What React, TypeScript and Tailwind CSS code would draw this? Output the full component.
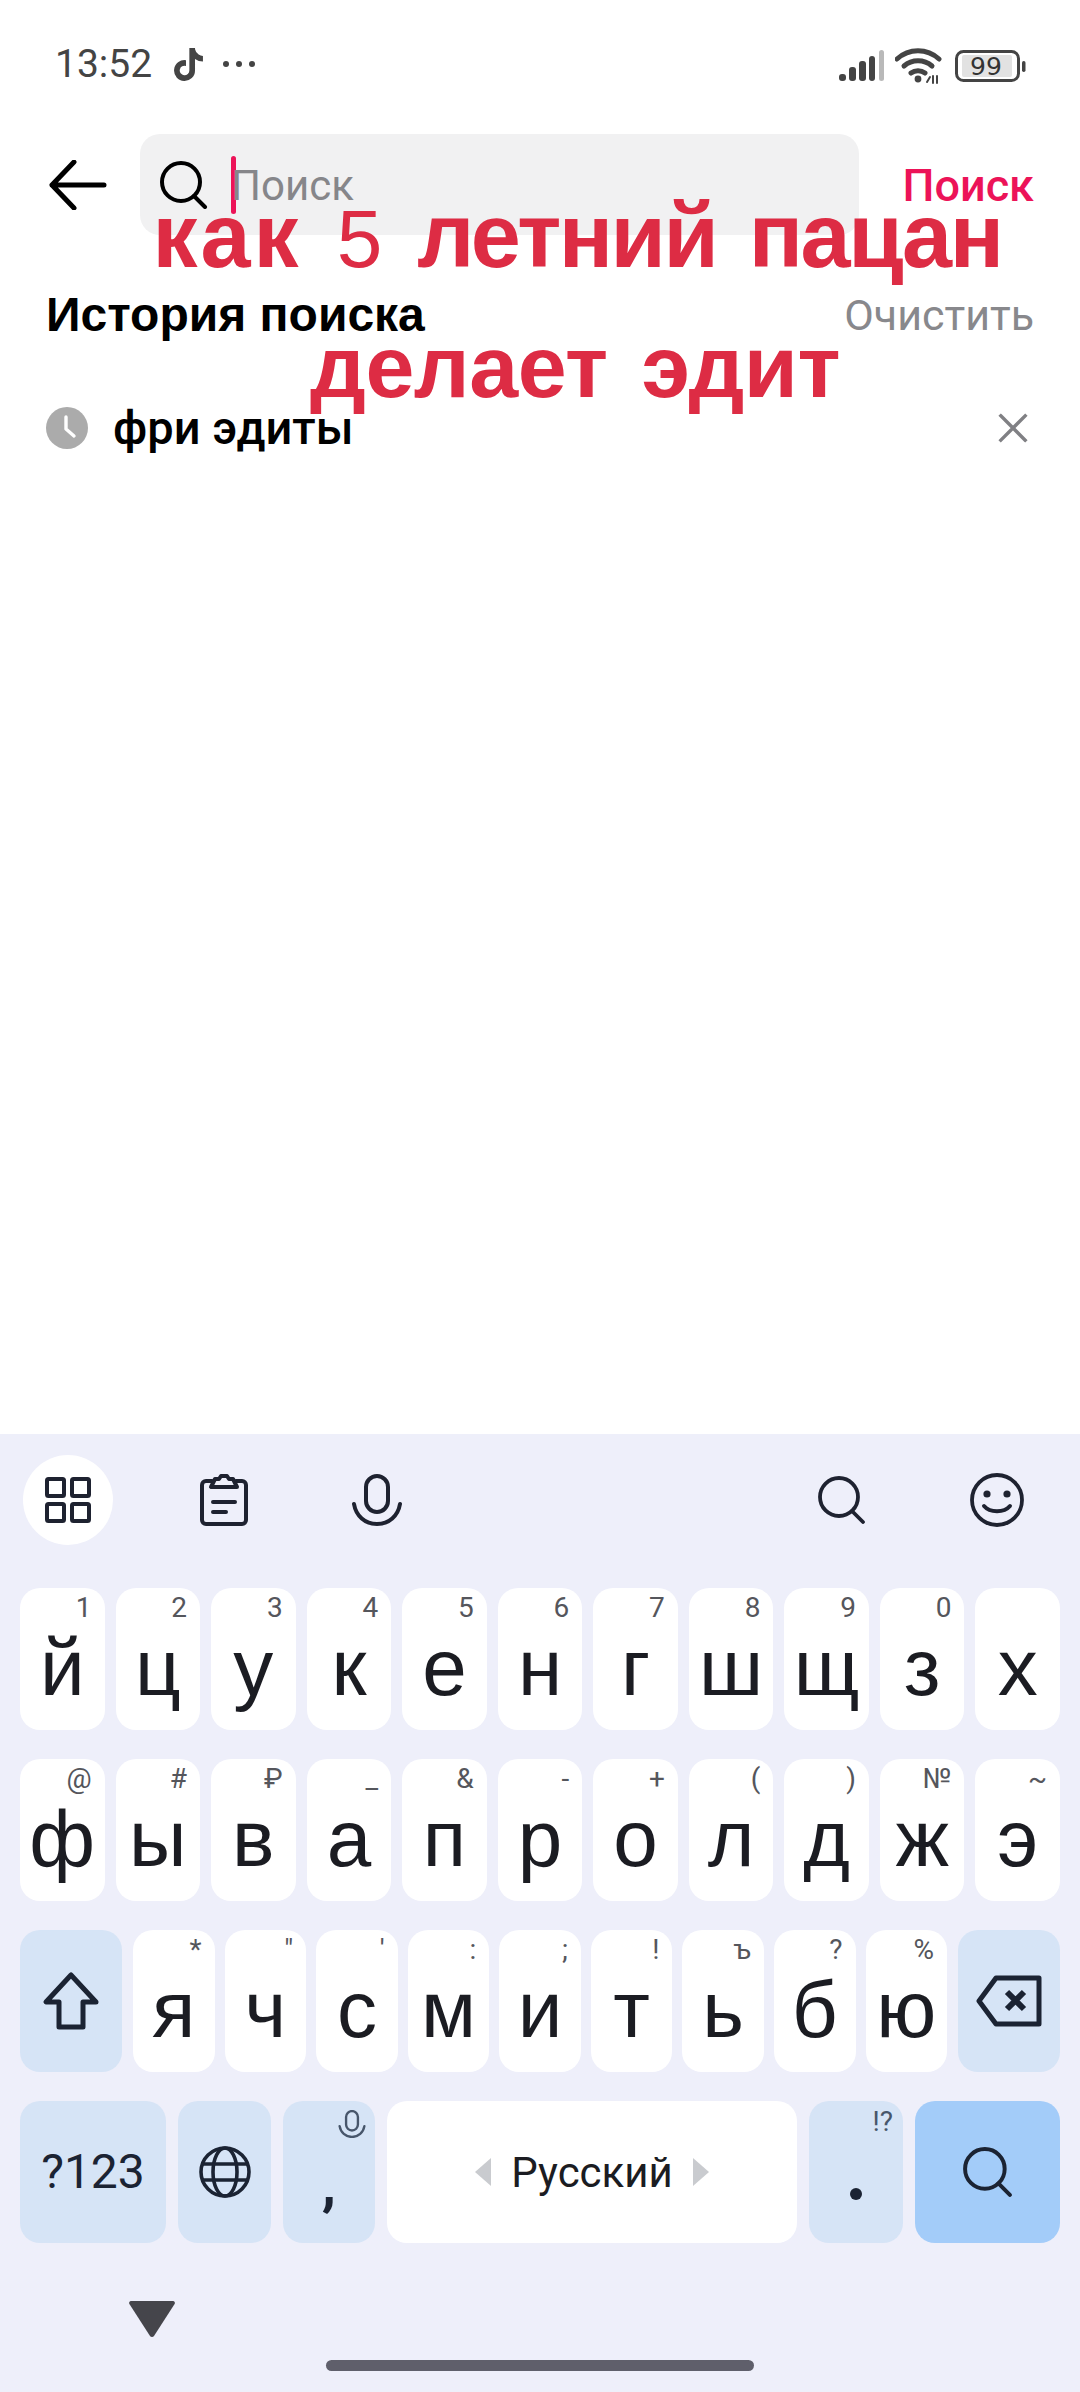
import { FaTiktok } from "react-icons/fa";

const roboto = { fontFamily: '"Roboto", "Noto Sans", sans-serif' };
const liberation = { fontFamily: '"Liberation Sans", sans-serif' };

interface KeyDef {
  label: string;
  hint?: string;
}

const row1: KeyDef[] = [
  { label: "й", hint: "1" },
  { label: "ц", hint: "2" },
  { label: "у", hint: "3" },
  { label: "к", hint: "4" },
  { label: "е", hint: "5" },
  { label: "н", hint: "6" },
  { label: "г", hint: "7" },
  { label: "ш", hint: "8" },
  { label: "щ", hint: "9" },
  { label: "з", hint: "0" },
  { label: "х" },
];

const row2: KeyDef[] = [
  { label: "ф", hint: "@" },
  { label: "ы", hint: "#" },
  { label: "в", hint: "₽" },
  { label: "а", hint: "_" },
  { label: "п", hint: "&" },
  { label: "р", hint: "-" },
  { label: "о", hint: "+" },
  { label: "л", hint: "(" },
  { label: "д", hint: ")" },
  { label: "ж", hint: "№" },
  { label: "э", hint: "~" },
];

const row3: KeyDef[] = [
  { label: "я", hint: "*" },
  { label: "ч", hint: '"' },
  { label: "с", hint: "'" },
  { label: "м", hint: ":" },
  { label: "и", hint: ";" },
  { label: "т", hint: "!" },
  { label: "ь", hint: "ъ" },
  { label: "б", hint: "?" },
  { label: "ю", hint: "%" },
];

function LetterKey({ label, hint }: KeyDef) {
  return (
    <div className="relative flex h-[142px] flex-1 items-end justify-center rounded-[20px] bg-white pb-[6px] text-[80px] leading-[112px] text-[#1b1c22]" style={liberation}>
      {hint && (
        <span className="absolute right-[13px] top-[2px] text-[28px] leading-[36px] text-[#55565c]" style={roboto}>{hint}</span>
      )}
      {label}
    </div>
  );
}

function SearchGlyph({ size, stroke, width = 3.2 }: { size: number; stroke: string; width?: number }) {
  return (
    <svg width={size} height={size} viewBox="0 0 48 48" fill="none" stroke={stroke} strokeWidth={width} strokeLinecap="round">
      <circle cx="21" cy="21" r="19" />
      <path d="M34 35l11 11" />
    </svg>
  );
}

function StatusBar() {
  return (
    <div className="flex h-[134px] items-start justify-between pl-[55px] pr-[54px] pt-[42px]">
      <div className="flex items-center text-[#444444]">
        <span className="text-[39px] leading-[44px]">13:52</span>
        <FaTiktok className="ml-[21px] h-[33px] w-[31px]" />
        <span className="ml-[19px] flex gap-[7px]">
          <span className="h-[6px] w-[6px] rounded-full bg-[#444444]" />
          <span className="h-[6px] w-[6px] rounded-full bg-[#444444]" />
          <span className="h-[6px] w-[6px] rounded-full bg-[#444444]" />
        </span>
      </div>
      <div className="flex items-center gap-[11px] pt-[6px]">
        <svg width="46" height="32" viewBox="0 0 46 32" className="mr-[-1px]">
          <rect x="0" y="24" width="7" height="7" rx="3" fill="#444" />
          <rect x="10" y="17" width="7" height="14" rx="3" fill="#444" />
          <rect x="20" y="11" width="7" height="20" rx="3" fill="#444" />
          <rect x="30" y="6" width="6" height="25" rx="3" fill="#444" />
          <rect x="40" y="0" width="5" height="31" rx="2.5" fill="#b9b9b9" />
        </svg>
        <svg width="47" height="36" viewBox="0 0 47 36" fill="none" stroke="#444" strokeWidth="5" strokeLinecap="round">
          <path d="M2 11C14 0 32 0 44 11" />
          <path d="M9 18c8-7 20-7 28 0" />
          <path d="M16 25c4-3 10-3 14 0" />
          <circle cx="23" cy="31" r="3.4" fill="#444" stroke="none" />
          <path d="M35 29l-3 5M38 28v7M42 28v7" strokeWidth="2" />
        </svg>
        <svg width="71" height="32" viewBox="0 0 71 32" fill="none" className="ml-[2px]">
          <rect x="1.5" y="1.5" width="62" height="29" rx="7" stroke="#444" strokeWidth="3" />
          <rect x="7" y="5" width="50" height="22" rx="2" fill="#e2e2e2" />
          <rect x="67" y="11" width="3.5" height="11" rx="1.7" fill="#444" />
          <text x="31" y="25" textAnchor="middle" fontSize="25" fill="#333" fontFamily="DejaVu Sans">99</text>
        </svg>
      </div>
    </div>
  );
}

function SearchHeader() {
  return (
    <div className="flex h-[101px] items-center pl-[49px] pr-[46px]">
      <svg width="58" height="50" viewBox="0 0 58 50" fill="none" stroke="#000" strokeWidth="5" strokeLinecap="round" strokeLinejoin="round" className="mr-[33px] shrink-0">
        <path d="M55 25H3M25 2L3 25l22 23" />
      </svg>
      <div className="flex h-full w-[719px] items-center rounded-[20px] bg-[#f1f1f2] pl-[20px]">
        <SearchGlyph size={48} stroke="#000" width={4} />
        <span className="ml-[23px] h-[58px] w-[5px] rounded-full bg-[#ec1358]" />
        <span className="-ml-[5px] pt-[3px] text-[42px] leading-[48px] text-[#86868a]">Поиск</span>
      </div>
      <span className="ml-auto pt-[2px] text-[45px] font-medium leading-[48px] text-[#ec1358]">Поиск</span>
    </div>
  );
}

function History() {
  return (
    <div className="pl-[46px] pr-[46px] pt-[54px]">
      <div className="flex items-center justify-between leading-[52px]">
        <span className="text-[48px] font-bold text-black" style={liberation}>История поиска</span>
        <span className="text-[43px] text-[#88888c]">Очистить</span>
      </div>
      <div className="mt-[61px] flex items-center">
        <svg width="42" height="42" viewBox="0 0 42 42" className="shrink-0">
          <circle cx="21" cy="21" r="21" fill="#ababab" />
          <path d="M20 10v12l8 7" fill="none" stroke="#fff" strokeWidth="3.4" strokeLinecap="round" strokeLinejoin="round" />
        </svg>
        <span className="ml-[25px] text-[47px] font-medium leading-[52px] text-black">фри эдиты</span>
        <svg width="30" height="30" viewBox="0 0 32 32" className="ml-auto mr-[6px]" stroke="#808084" strokeWidth="3.6" strokeLinecap="square">
          <path d="M3 3l26 26M29 3L3 29" />
        </svg>
      </div>
    </div>
  );
}

function KeyboardToolbar() {
  const stroke = "#1e2230";
  return (
    <div className="flex h-[154px] items-center pb-[22px] pl-[23px] pr-[56px]">
      <div className="flex h-[90px] w-[90px] items-center justify-center rounded-full bg-white">
        <svg width="46" height="46" viewBox="0 0 46 46" fill="none" stroke={stroke} strokeWidth="4" strokeLinejoin="round">
          <rect x="2" y="2" width="17" height="17" rx="1.5" />
          <rect x="27" y="2" width="17" height="17" rx="1.5" />
          <rect x="2" y="27" width="17" height="17" rx="1.5" />
          <rect x="27" y="27" width="17" height="17" rx="1.5" />
        </svg>
      </div>
      <svg width="48" height="52" viewBox="0 0 48 52" fill="none" stroke={stroke} strokeWidth="4" strokeLinecap="round" strokeLinejoin="round" className="ml-[87px]">
        <path d="M12 7H6a4 4 0 0 0-4 4v35a4 4 0 0 0 4 4h36a4 4 0 0 0 4-4V11a4 4 0 0 0-4-4h-6" />
        <path d="M11 13h26l-4-8h-4l-2-3h-6l-2 3h-4z" />
        <path d="M13 28h22M13 38h13" />
      </svg>
      <svg width="50" height="52" viewBox="0 0 50 52" fill="none" stroke={stroke} strokeWidth="4" strokeLinecap="round" className="ml-[104px]">
        <rect x="14" y="2" width="22" height="36" rx="11" />
        <path d="M2 30c2 12 11 20 23 20s21-8 23-20" />
      </svg>
      <div className="ml-auto flex items-center gap-[104px]">
        <SearchGlyph size={48} stroke={stroke} width={3.8} />
        <svg width="54" height="54" viewBox="0 0 54 54" fill="none" stroke={stroke} strokeWidth="3.8" strokeLinecap="round">
          <circle cx="27" cy="27" r="25" />
          <circle cx="17" cy="21" r="3.6" fill={stroke} stroke="none" />
          <circle cx="37" cy="21" r="3.6" fill={stroke} stroke="none" />
          <path d="M14 33c6 7 20 7 26 0" strokeWidth="4" />
        </svg>
      </div>
    </div>
  );
}

function Keyboard() {
  const stroke = "#1b2333";
  return (
    <div className="flex flex-1 flex-col bg-[#eeeffa]" style={roboto}>
      <KeyboardToolbar />
      <div className="flex flex-col gap-[29px] px-[20px]">
        <div className="flex gap-[11px]">
          {row1.map((k) => (
            <LetterKey key={k.label} {...k} />
          ))}
        </div>
        <div className="flex gap-[11px]">
          {row2.map((k) => (
            <LetterKey key={k.label} {...k} />
          ))}
        </div>
        <div className="flex gap-[11px]">
          <div className="flex h-[142px] w-[102px] shrink-0 items-center justify-center rounded-[20px] bg-[#d6e4f6]">
            <svg width="58" height="60" viewBox="0 0 58 60" fill="none" stroke={stroke} strokeWidth="5" strokeLinejoin="round">
              <path d="M29 4L4 31h13v25h24V31h13z" />
            </svg>
          </div>
          <div className="flex flex-1 gap-[10px]">
            {row3.map((k) => (
              <LetterKey key={k.label} {...k} />
            ))}
          </div>
          <div className="flex h-[142px] w-[102px] shrink-0 items-center justify-center rounded-[20px] bg-[#d6e4f6]">
            <svg width="66" height="52" viewBox="0 0 66 52" fill="none" stroke={stroke} strokeWidth="5" strokeLinejoin="round">
              <path d="M20 3h43v46H20L3 26z" />
              <path d="M31 17l17 17M48 17L31 34" strokeWidth="6" />
            </svg>
          </div>
        </div>
        <div className="flex gap-[12px]">
          <div className="flex h-[142px] w-[146px] items-center justify-center rounded-[20px] bg-[#d6e4f6] text-[48px] text-[#1b2333]">?123</div>
          <div className="flex h-[142px] w-[93px] items-center justify-center rounded-[20px] bg-[#d6e4f6]">
            <svg width="52" height="52" viewBox="0 0 52 52" fill="none" stroke={stroke} strokeWidth="3.6">
              <circle cx="26" cy="26" r="24" />
              <ellipse cx="26" cy="26" ry="24" rx="12" />
              <path d="M4 18h44M4 34h44" />
            </svg>
          </div>
          <div className="relative flex h-[142px] w-[92px] items-center justify-center rounded-[20px] bg-[#d6e4f6] pt-[24px] text-[58px] font-bold leading-none text-[#1b2333]">
            <svg width="28" height="28" viewBox="0 0 50 52" fill="none" stroke="#47566b" strokeWidth="4.4" strokeLinecap="round" className="absolute right-[9px] top-[9px]">
              <rect x="14" y="2" width="22" height="36" rx="11" />
              <path d="M2 30c2 12 11 20 23 20s21-8 23-20" />
            </svg>
            ,
          </div>
          <div className="flex h-[142px] w-[410px] items-center justify-center gap-[20px] rounded-[20px] bg-white text-[42px] text-[#1b1c22]">
            <svg width="16" height="28" viewBox="0 0 16 28"><path d="M16 0v28L0 14z" fill="#c9cbcf" /></svg>
            Русский
            <svg width="16" height="28" viewBox="0 0 16 28"><path d="M0 0v28l16-14z" fill="#c9cbcf" /></svg>
          </div>
          <div className="relative flex h-[142px] w-[94px] items-center justify-center rounded-[20px] bg-[#d6e4f6] pt-[44px]">
            <span className="absolute right-[10px] top-[3px] text-[28px] leading-[36px] text-[#47566b]">!?</span>
            <span className="h-[12px] w-[12px] rounded-full bg-[#1b2333]" />
          </div>
          <div className="flex h-[142px] flex-1 items-center justify-center rounded-[20px] bg-[#a3ccf9]">
            <SearchGlyph size={50} stroke={stroke} width={3.8} />
          </div>
        </div>
      </div>
      <div className="relative flex-1">
        <svg width="48" height="40" viewBox="0 0 48 40" className="absolute left-[128px] top-[56px]">
          <path d="M3 2h42a2 2 0 0 1 1.6 3L26 37a2.4 2.4 0 0 1-4 0L1.4 5A2 2 0 0 1 3 2z" fill="#45454b" />
        </svg>
        <div className="absolute left-[326px] top-[117px] h-[11px] w-[428px] rounded-full bg-[#5f5f6b]" />
      </div>
    </div>
  );
}

export default function App() {
  return (
    <div className="relative flex h-[2392px] w-[1080px] flex-col overflow-hidden bg-white" style={roboto}>
      <StatusBar />
      <SearchHeader />
      <History />
      <div className="flex-1" />
      <div className="flex h-[958px] flex-col">
        <Keyboard />
      </div>
      {/* caption burned into the video, sits over the search page */}
      <div
        className="absolute left-0 top-[172px] w-[1080px] text-center text-[90px] font-bold leading-[128px] text-[#dd2c44]"
        style={{ ...liberation, wordSpacing: "10px" }}
      >
        <div className="pl-[74px]">
          <span className="tracking-[3px]">как</span> <span className="text-[82px] font-normal">5</span> <span className="tracking-[-2.5px]">летний пацан</span>
        </div>
        <div className="pl-[70px] text-[88px] tracking-[-0.5px]">делает эдит</div>
      </div>
    </div>
  );
}
